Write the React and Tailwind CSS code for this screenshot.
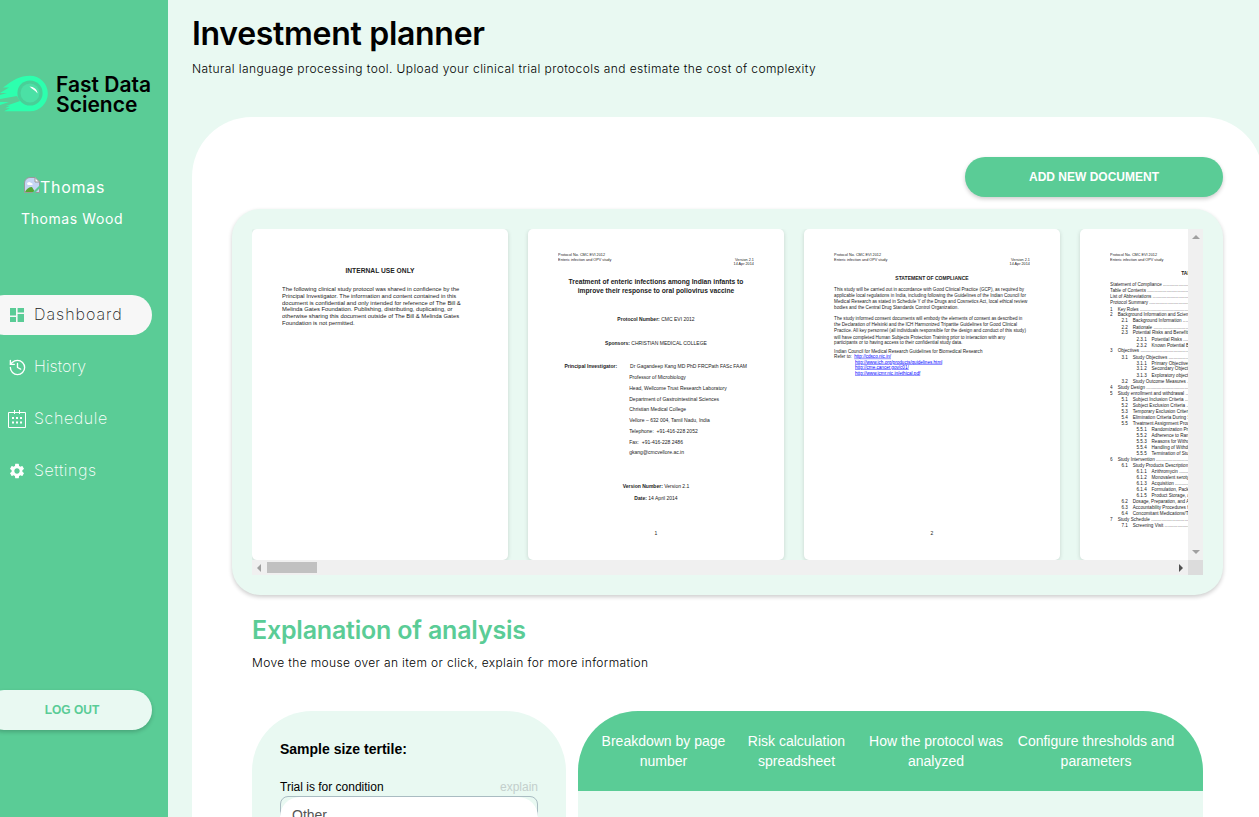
import React from "react";
import { History } from "lucide-react";
import { MdSettings } from "react-icons/md";

const NAV_ITEMS = [
  { label: "Dashboard", icon: "dashboard", tracking: "tracking-[1px]", active: true },
  { label: "History", icon: "history", tracking: "tracking-[0.1px]" },
  { label: "Schedule", icon: "schedule", tracking: "tracking-[0.6px]" },
  { label: "Settings", icon: "settings", tracking: "tracking-[0.6px]" },
];

const TABS = [
  { label: "Breakdown by page number", width: "w-[139px]" },
  { label: "Risk calculation spreadsheet", width: "w-[127px]" },
  { label: "How the protocol was analyzed", width: "w-[152px]" },
  { label: "Configure thresholds and parameters", width: "w-[168px]" },
];

const INVESTIGATOR = [
  "Professor of Microbiology",
  "Head, Wellcome Trust Research Laboratory",
  "Department of Gastrointestinal Sciences",
  "Christian Medical College",
  "Vellore – 632 004, Tamil Nadu, India",
  "Telephone:  +91-416-228 2052",
  "Fax:  +91-416-228 2486",
  "gkang@cmcvellore.ac.in",
];

const COMPLIANCE_A = [
  "This study will be carried out in accordance with Good Clinical Practice (GCP), as required by",
  "applicable local regulations in India, including following the Guidelines of the Indian Council for",
  "Medical Research as stated in Schedule Y of the Drugs and Cosmetics Act, local ethical review",
  "bodies and the Central Drug Standards Control Organization.",
];

const COMPLIANCE_B = [
  "The study informed consent documents will embody the elements of consent as described in",
  "the Declaration of Helsinki and the ICH Harmonized Tripartite Guidelines for Good Clinical",
  "Practice. All key personnel (all individuals responsible for the design and conduct of this study)",
  "will have completed Human Subjects Protection Training prior to interaction with any",
  "participants or to having access to their confidential study data.",
];

const CONTENTS = [
  ["", "Statement of Compliance"],
  ["", "Table of Contents"],
  ["", "List of Abbreviations"],
  ["", "Protocol Summary"],
  ["1", "Key Roles"],
  ["2", "Background Information and Scientific Rationale"],
  ["2.1", "Background Information"],
  ["2.2", "Rationale"],
  ["2.3", "Potential Risks and Benefits"],
  ["2.3.1", "Potential Risks"],
  ["2.3.2", "Known Potential Benefits"],
  ["3", "Objectives"],
  ["3.1", "Study Objectives"],
  ["3.1.1", "Primary Objectives"],
  ["3.1.2", "Secondary Objectives"],
  ["3.1.3", "Exploratory objectives"],
  ["3.2", "Study Outcome Measures"],
  ["4", "Study Design"],
  ["5", "Study enrollment and withdrawal"],
  ["5.1", "Subject Inclusion Criteria"],
  ["5.2", "Subject Exclusion Criteria"],
  ["5.3", "Temporary Exclusion Criteria"],
  ["5.4", "Elimination Criteria During Study"],
  ["5.5", "Treatment Assignment Procedures"],
  ["5.5.1", "Randomization Procedures"],
  ["5.5.2", "Adherence to Randomization"],
  ["5.5.3", "Reasons for Withdrawal"],
  ["5.5.4", "Handling of Withdrawals"],
  ["5.5.5", "Termination of Study"],
  ["6", "Study Intervention"],
  ["6.1", "Study Products Description"],
  ["6.1.1", "Azithromycin"],
  ["6.1.2", "Monovalent serotype 3"],
  ["6.1.3", "Acquisition"],
  ["6.1.4", "Formulation, Packaging"],
  ["6.1.5", "Product Storage, and Stability"],
  ["6.2", "Dosage, Preparation, and Administration"],
  ["6.3", "Accountability Procedures for"],
  ["6.4", "Concomitant Medications/Treatments"],
  ["7", "Study Schedule"],
  ["7.1", "Screening Visit"],
];

const LEVELS = [
  { num: "ml-0 w-[18px]" },
  { num: "ml-[27px] w-[27px]" },
  { num: "ml-[63px] w-[36px]" },
];

const NavIcon = ({ name }) => {
  if (name === "dashboard") {
    return (
      <svg viewBox="0 0 14 14" className="ml-[2px] h-3.5 w-3.5" fill="#5acc96">
        <path d="M0 0h6v7.6H0zM7.6 0H14v4.4H7.6zM0 9h6v5H0zM7.6 6H14v8H7.6z" />
      </svg>
    );
  }
  if (name === "history") {
    return <History className="h-[19px] w-[19px]" strokeWidth={1.7} />;
  }
  if (name === "schedule") {
    return (
      <svg viewBox="0 0 18 18" className="h-[18px] w-[18px]" fill="none" stroke="white">
        <path d="M.5 2.5h17v15H.5zM6.5 0v4M11.5 0v4" />
        <path d="M4 8h2m2 0h2m2 0h2M4 12.5h2m2 0h2m2 0h2" strokeWidth="2" />
      </svg>
    );
  }
  return <MdSettings className="h-[18px] w-[18px]" />;
};

const Logo = () => (
  <div className="flex h-[40px] items-start">
    <svg viewBox="0 0 50 40" className="h-10 w-[50px] shrink-0">
      <path
        d="M0 18 9 12.5H3C13 5 20 .7 30 .7a17.8 17.8 0 0 1 0 35.6H4l6-3H5l5-2.5H0V20l7-2H0z"
        fill="#2dffae"
      />
      <path d="m0 24 17-3 3 5-20 7v-3l9-3H0z" fill="#5acc96" />
      <circle cx="30" cy="18" r="12.6" fill="#49cf98" />
      <circle cx="30" cy="18" r="9.5" fill="#4be0a5" />
      <path d="M29.5 11.5c4 0 8 3 8 7-2-3-5-4-8-7z" fill="white" />
    </svg>
    <div className="ml-[6px] w-[110px] font-['Inter'] text-[21px] leading-5 font-semibold whitespace-nowrap text-black">
      <div>Fast Data</div>
      <div>Science</div>
    </div>
  </div>
);

const BrokenAvatar = () => (
  <div className="ml-6 flex h-6 items-center">
    <svg viewBox="0 0 16 16" className="mb-1 h-4 w-4">
      <path d="M.5 6a5.5 5.5 0 0 1 5.5-5.5h5L15.5 5v10.5H.5z" fill="#c5d5f4" stroke="#9a9a9a" />
      <path d="M3 7c0-2 3-3 4-1 2 0 2 2 1 2H4z" fill="white" />
      <path d="M1 15c1-3 4-5 7-5l3 5z" fill="#55a630" />
      <path d="M11 .5V5h4.5z" fill="white" stroke="#9a9a9a" />
      <path d="M16 8 8 16h3l5-5z" fill="#5acc96" />
    </svg>
    <span className="text-[16px] tracking-[0.7px]">Thomas</span>
  </div>
);

const Sidebar = () => (
  <aside className="flex w-[168px] shrink-0 flex-col overflow-hidden bg-[#5acc96] pt-[75px] font-['Inter',sans-serif] text-white">
    <Logo />
    <div className="mt-[60px]">
      <BrokenAvatar />
    </div>
    <div className="mt-[10px] ml-[21px] text-[14px] leading-5 tracking-[0.6px]">Thomas Wood</div>
    <nav className="mt-[66px] -ml-4 flex flex-col gap-3">
      {NAV_ITEMS.map((item) => (
        <a
          key={item.label}
          className={`flex h-10 w-[168px] items-center rounded-full pl-6 text-[16px] font-extralight ${
            item.active ? "bg-[#f7f7f7] text-[#222]" : "text-white"
          }`}
        >
          <span className="w-[26px]">
            <NavIcon name={item.icon} />
          </span>
          <span className={`pb-0.5 ${item.tracking}`}>{item.label}</span>
        </a>
      ))}
    </nav>
    <button className="mt-[199px] -ml-4 h-10 w-[168px] shrink-0 rounded-full bg-[#e9f9f2] pl-2 font-['Liberation_Sans',sans-serif] text-[12px] font-bold text-[#5acc96] shadow-[0_2px_4px_rgba(0,0,0,0.2)]">
      LOG OUT
    </button>
  </aside>
);

// Pages are laid out at US Letter size in points and scaled down to thumbnails
const Page = ({ children }) => (
  <div className="h-[331px] w-[256px] shrink-0 overflow-hidden rounded-[5px] bg-white shadow-[0_1px_4px_rgba(0,0,0,0.15)]">
    <div className="h-[792px] w-[612px] origin-top-left scale-[0.4183] px-[72px] text-[12px] whitespace-pre text-[#222]">
      {children}
    </div>
  </div>
);

const PageHeader = () => (
  <div className="flex justify-between pt-[57px] text-[9px] leading-[11px]">
    <div>
      <div>Protocol No. CMC EVI 2012</div>
      <div>Enteric infection and OPV study</div>
    </div>
    <div className="pt-[11px] text-right">
      <div>Version 2.1</div>
      <div>14 Apr 2014</div>
    </div>
  </div>
);

const ContentsRow = ({ num, title }) => {
  const level = LEVELS[Math.max(0, num.split(".").length - 1)];
  return (
    <div className="flex h-[14.4px] w-[468px] overflow-hidden leading-[14.4px]">
      {num && <span className={`shrink-0 ${level.num}`}>{num}</span>}
      <span>{title}</span>
      <span>{" " + ".".repeat(120)}</span>
    </div>
  );
};

const Documents = () => (
  <div className="flex h-[331px] w-[936px] gap-5 overflow-hidden font-['Liberation_Sans',sans-serif]">
    <Page>
      <div className="pt-[90px] text-center text-[16px] leading-5 font-bold">INTERNAL USE ONLY</div>
      <div className="mt-[26px] text-[14px] leading-[16px]">
        <div>The following clinical study protocol was shared in confidence by the</div>
        <div>Principal Investigator. The information and content contained in this</div>
        <div>document is confidential and only intended for reference of The Bill &amp;</div>
        <div>Melinda Gates Foundation. Publishing, distributing, duplicating, or</div>
        <div>otherwise sharing this document outside of The Bill &amp; Melinda Gates</div>
        <div>Foundation is not permitted.</div>
      </div>
    </Page>
    <Page>
      <PageHeader />
      <div className="mt-[26px] text-center text-[16px] leading-[21px] font-bold">
        <div>Treatment of enteric infections among Indian infants to</div>
        <div>improve their response to oral poliovirus vaccine</div>
      </div>
      <div className="mt-[49px] text-center leading-5">
        <b>Protocol Number:</b> CMC EVI 2012
      </div>
      <div className="mt-[36px] text-center leading-5">
        <b>Sponsors:</b> CHRISTIAN MEDICAL COLLEGE
      </div>
      <div className="mt-[33px] flex pl-[15px] leading-[25.9px]">
        <b className="w-[155px]">Principal Investigator:</b>
        <div>
          <div className="pl-[2px]">Dr Gagandeep Kang MD PhD FRCPath FASc FAAM</div>
          {INVESTIGATOR.map((line) => (
            <div key={line}>{line}</div>
          ))}
        </div>
      </div>
      <div className="mt-[54px] text-center leading-[27.5px]">
        <div>
          <b>Version Number:</b> Version 2.1
        </div>
        <div>
          <b>Date:</b> 14 April 2014
        </div>
      </div>
      <div className="mt-[60px] text-center leading-5">1</div>
    </Page>
    <Page>
      <PageHeader />
      <div className="mt-[19px] text-center leading-5 font-bold">STATEMENT OF COMPLIANCE</div>
      <div className="text-[11px]">
        <div className="mt-[8px] leading-[14.8px]">
          {COMPLIANCE_A.map((line) => (
            <div key={line}>{line}</div>
          ))}
        </div>
        <div className="mt-[11px] leading-[14.5px]">
          {COMPLIANCE_B.map((line) => (
            <div key={line}>{line}</div>
          ))}
        </div>
        <div className="mt-[7px] leading-[12.8px]">
          <div>Indian Council for Medical Research Guidelines for Biomedical Research</div>
          <div className="flex">
            <div className="w-[48px]">Refer to:</div>
            <div className="text-[#0000ff] underline">
              <div>http://cdsco.nic.in/</div>
              <div className="pl-[2px]">http://www.ich.org/products/guidelines.html</div>
              <div className="pl-[2px]">http://cme.cancer.gov/c01/</div>
              <div className="pl-[2px]">http://www.icmr.nic.in/ethical.pdf</div>
            </div>
          </div>
        </div>
      </div>
      <div className="mt-[367px] text-center leading-5">2</div>
    </Page>
    <Page>
      <PageHeader />
      <div className="mt-[5px] text-center leading-5 font-bold">TABLE OF CONTENTS</div>
      <div className="mt-[11px] text-[11px]">
        {CONTENTS.map(([num, title]) => (
          <ContentsRow key={num + title} num={num} title={title} />
        ))}
      </div>
    </Page>
  </div>
);

const Carousel = () => (
  <section className="mt-3 h-[386px] rounded-[28px] bg-[#e9f9f2] p-5 shadow-[0_2px_4px_rgba(0,0,0,0.2)]">
    <div className="flex">
      <Documents />
      <div className="flex w-[15px] flex-col items-center justify-between bg-[#f0f0f0] py-[6px]">
        <svg viewBox="0 0 8 4" className="h-1 w-2" fill="#a0a0a0">
          <path d="M0 4 4 0l4 4z" />
        </svg>
        <svg viewBox="0 0 8 4" className="h-1 w-2" fill="#a0a0a0">
          <path d="m0 0 4 4 4-4z" />
        </svg>
      </div>
    </div>
    <div className="flex h-[15px]">
      <div className="flex w-[936px] items-center bg-[#f0f0f0]">
        <svg viewBox="0 0 4 8" className="ml-[5px] h-2 w-1" fill="#a0a0a0">
          <path d="M4 0 0 4l4 4z" />
        </svg>
        <div className="ml-[6px] h-[11px] w-[50px] bg-[#c1c1c1]" />
        <svg viewBox="0 0 4 8" className="mr-[5px] ml-auto h-2 w-1" fill="#505050">
          <path d="m0 0 4 4-4 4z" />
        </svg>
      </div>
      <div className="w-[15px] bg-[#dcdcdc]" />
    </div>
  </section>
);

const Analysis = () => (
  <section className="pl-5">
    <h2 className="mt-[17px] font-['Inter',sans-serif] text-[25px] leading-9 font-semibold tracking-[-0.2px] whitespace-nowrap text-[#5acc96]">
      Explanation of analysis
    </h2>
    <p className="mt-[5px] font-['Inter',sans-serif] text-[12px] leading-5 font-light tracking-[0.37px] whitespace-nowrap text-black">
      Move the mouse over an item or click, explain for more information
    </p>
    <div className="mt-[38px] flex gap-3">
      <div className="h-[200px] w-[314px] rounded-t-[60px] bg-[#e9f9f2] px-7 pt-7">
        <h3 className="text-[14px] leading-5 font-bold text-black">Sample size tertile:</h3>
        <div className="mt-[18px] flex justify-between text-[12px] leading-5">
          <span className="text-black">Trial is for condition</span>
          <span className="text-[#c3cfcc]">explain</span>
        </div>
        <div className="-mt-px h-10 w-[258px] rounded-[8px] border border-[#a9bcc2]">
          <div className="-mx-px h-10 rounded-[20px] bg-white pt-2 pl-3 text-[14px] leading-5 text-[#555]">
            Other
          </div>
        </div>
      </div>
      <div className="h-[200px] w-[625px] overflow-hidden rounded-t-[60px] bg-[#e9f9f2]">
        <div className="flex h-20 bg-[#5acc96] pt-5 pl-4 text-center text-[14px] leading-5 text-white">
          {TABS.map((tab) => (
            <div key={tab.label} className={`shrink-0 px-1 ${tab.width}`}>
              {tab.label}
            </div>
          ))}
        </div>
        <h3 className="mt-[20px] ml-7 pt-px font-['Inter',sans-serif] text-[14px] leading-6 font-normal tracking-[-0.2px] text-[#333]">
          Risk breakdown for the trial by page
        </h3>
      </div>
    </div>
  </section>
);

const App = () => (
  <div className="flex h-screen w-full overflow-hidden bg-[#e9f9f2] font-['Liberation_Sans',sans-serif]">
    <Sidebar />
    <main className="ml-6 w-[1071px] shrink-0">
      <h1 className="pt-3 font-['Inter',sans-serif] text-[32px] leading-[44px] font-semibold tracking-[-0.3px] whitespace-nowrap text-black">
        Investment planner
      </h1>
      <p className="mt-[3px] font-['Inter',sans-serif] text-[12px] leading-5 font-light tracking-[0.41px] whitespace-nowrap text-black">
        Natural language processing tool. Upload your clinical trial protocols and estimate the cost
        of complexity
      </p>
      <div className="mt-[38px] h-[900px] rounded-[60px] bg-white px-10 pt-10">
        <div className="flex justify-end">
          <button className="h-10 w-[258px] rounded-full bg-[#5acc96] text-[12px] font-bold text-white shadow-[0_2px_4px_rgba(0,0,0,0.2)]">
            ADD NEW DOCUMENT
          </button>
        </div>
        <Carousel />
        <Analysis />
      </div>
    </main>
  </div>
);

export default App;
